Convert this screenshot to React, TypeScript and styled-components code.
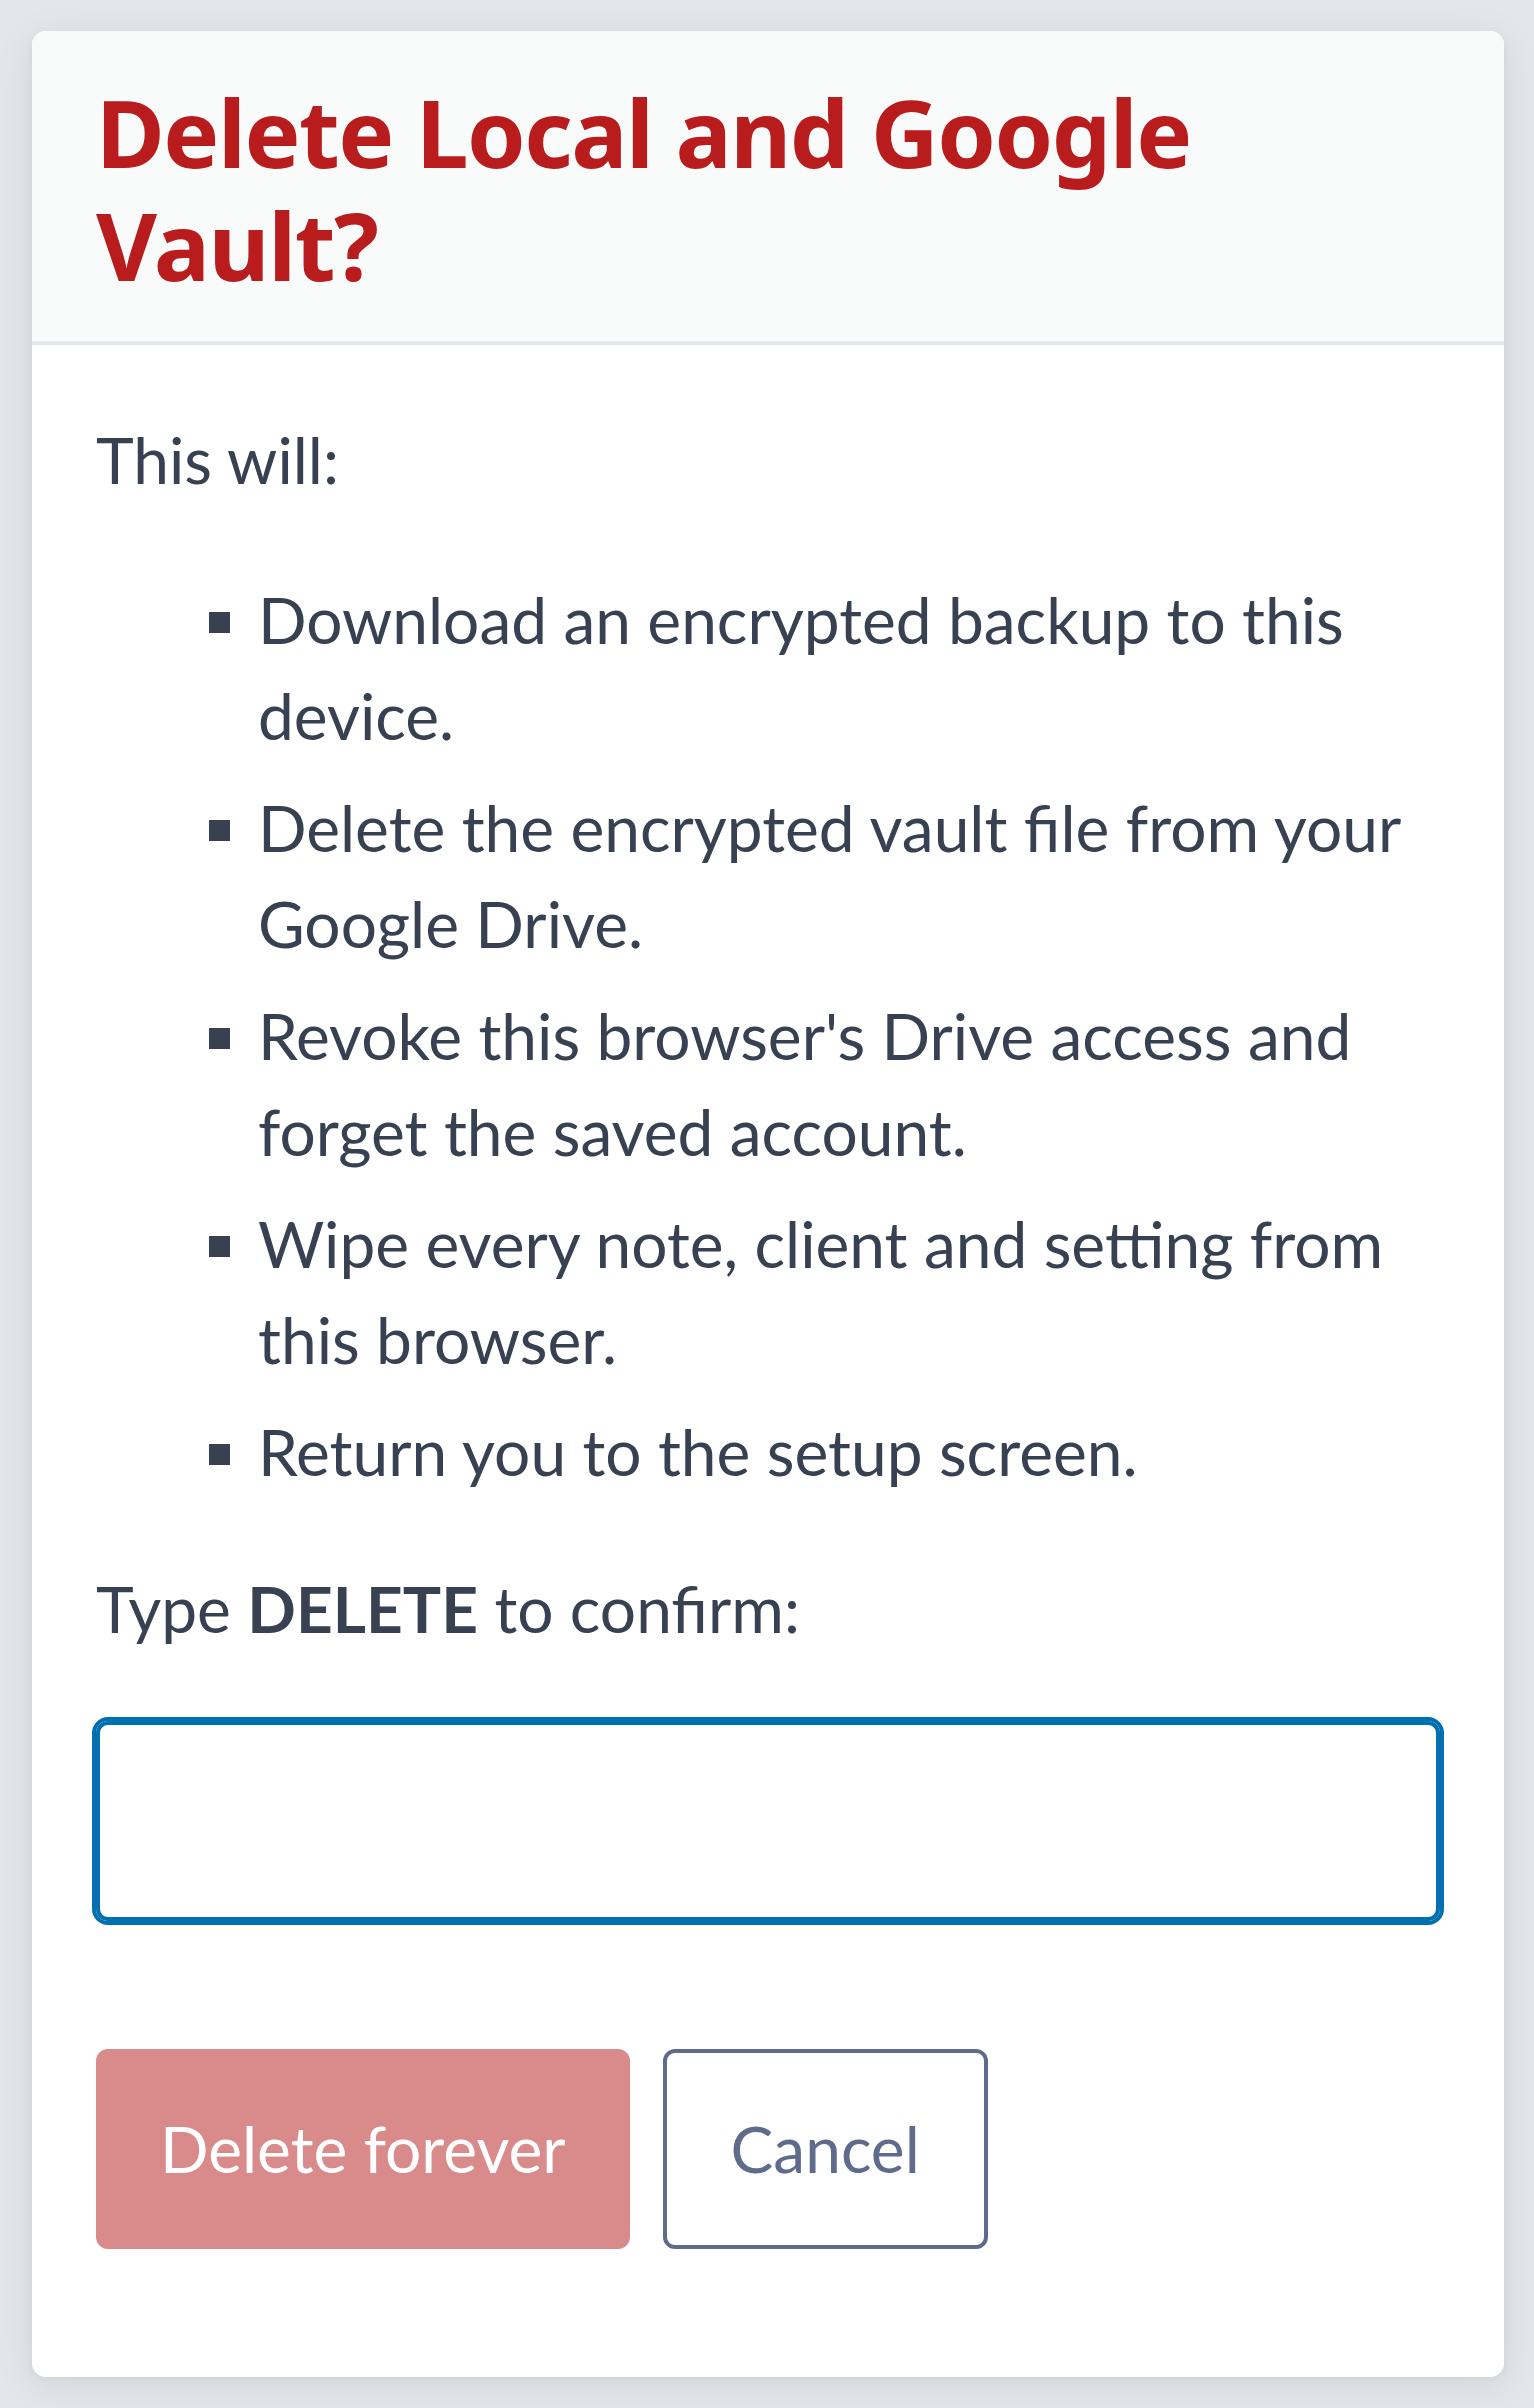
import { type ReactElement } from 'react';
import styled, { createGlobalStyle } from 'styled-components';

const GlobalStyle = createGlobalStyle`
  * {
    box-sizing: border-box;
  }

  html,
  body {
    margin: 0;
    padding: 0;
    background: #e4e6eb;
  }

  body {
    font-family: Lato, 'Noto Sans', sans-serif;
    color: #374151;
  }
`;

const Page = styled.div`
  min-height: 100vh;
  padding: 31px 30px 31px 32px;
`;

const Card = styled.section`
  background: #ffffff;
  border-radius: 14px;
  overflow: hidden;
  box-shadow: 0 8px 40px rgba(15, 23, 42, 0.08), 0 2px 8px rgba(15, 23, 42, 0.05);
`;

const Header = styled.header`
  background: #f9fbfa;
  padding: 45px 64px 39px;
  border-bottom: 4px solid #e5e7eb;
`;

const Title = styled.h2`
  margin: 0;
  font-family: 'Noto Sans', 'Open Sans', sans-serif;
  font-size: 94px;
  line-height: 113px;
  font-weight: 700;
  letter-spacing: -1.5px;
  color: #b91c1c;
`;

const Body = styled.div`
  padding: 67px 64px 128px;
  font-size: 64px;
  line-height: 96px;
`;

const Text = styled.p`
  margin: 0 0 64px;
`;

const Steps = styled.ul`
  margin: 0 0 61px;
  padding-left: 162px;
  list-style-type: square;

  li {
    margin-bottom: 16px;
  }

  li:last-child {
    margin-bottom: 0;
  }
`;

const ConfirmInput = styled.input`
  display: block;
  width: 100%;
  height: 200px;
  margin: 64px 0 0;
  padding: 0 32px;
  font: inherit;
  color: #111827;
  background: #ffffff;
  border: 4px solid #0070b0;
  border-radius: 12px;
  outline: 4px solid #0070b0;
  outline-offset: 0;
`;

const Actions = styled.div`
  display: flex;
  gap: 33px;
  margin-top: 128px;
`;

const Button = styled.button<{ $variant: 'danger' | 'ghost' }>`
  height: 200px;
  padding: 0 64px;
  font-family: inherit;
  font-size: 64px;
  line-height: 96px;
  border-radius: 12px;
  cursor: pointer;
  background: ${(p) => (p.$variant === 'danger' ? '#d98b8b' : '#ffffff')};
  color: ${(p) => (p.$variant === 'danger' ? '#ffffff' : '#5f6b8a')};
  border: ${(p) => (p.$variant === 'danger' ? '0' : '4px solid #5f6b8a')};
`;

const steps = [
  'Download an encrypted backup to this device.',
  'Delete the encrypted vault file from your Google Drive.',
  "Revoke this browser's Drive access and forget the saved account.",
  'Wipe every note, client and setting from this browser.',
  'Return you to the setup screen.',
];

export default function App(): ReactElement {
  return (
    <>
      <GlobalStyle />
      <Page>
        <Card>
          <Header>
            <Title>Delete Local and Google Vault?</Title>
          </Header>
          <Body>
            <Text>This will:</Text>
            <Steps>
              {steps.map((s) => (
                <li key={s}>{s}</li>
              ))}
            </Steps>
            <label>
              Type <strong>DELETE</strong> to confirm:
              <ConfirmInput type="text" autoFocus />
            </label>
            <Actions>
              <Button $variant="danger" disabled>
                Delete forever
              </Button>
              <Button $variant="ghost">Cancel</Button>
            </Actions>
          </Body>
        </Card>
      </Page>
    </>
  );
}
